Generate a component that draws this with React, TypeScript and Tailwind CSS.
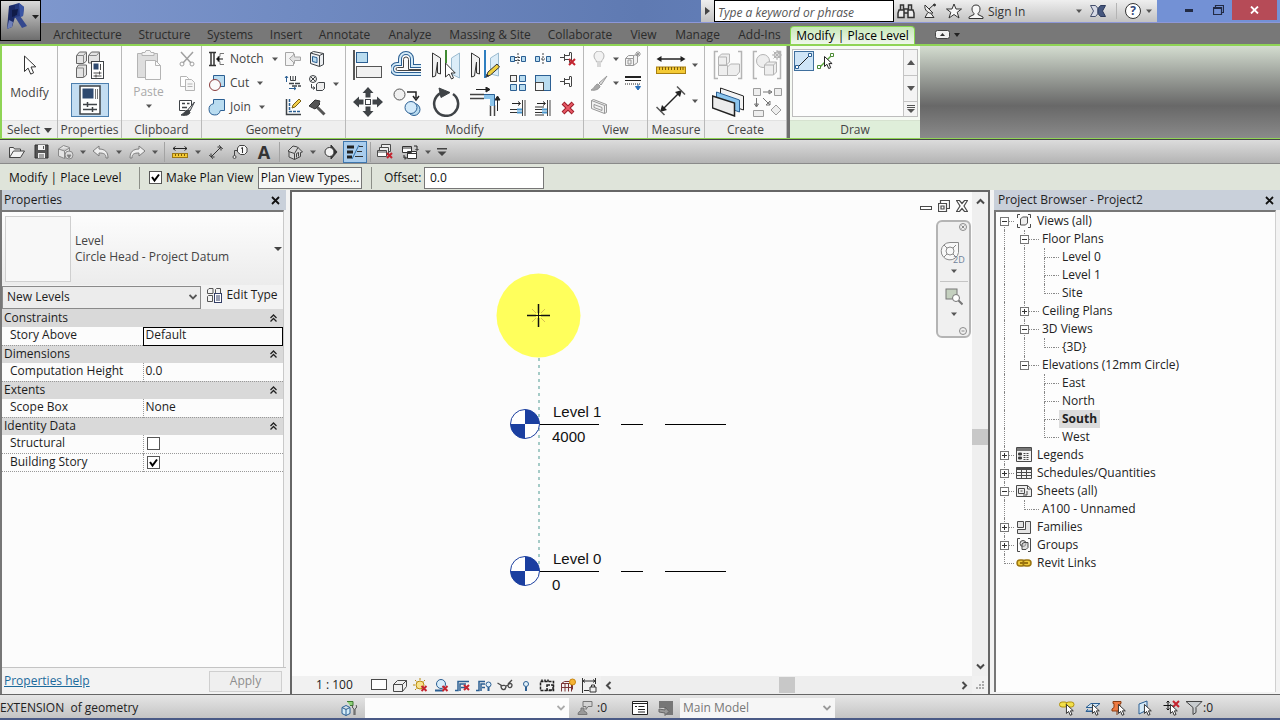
import React from 'react';

interface IconProps {
  w: number;
  h?: number;
  stroke?: string;
  children: React.ReactNode;
}

function Icon({ w, h = w, stroke = '#4a4a4a', children }: IconProps) {
  return (
    <svg width={w} height={h} viewBox={`0 0 ${w} ${h}`} fill="none" stroke={stroke} strokeWidth="1" className="shrink-0" aria-hidden="true">
      {children}
    </svg>
  );
}

const DARK = '#3f4347';
const BLUE = '#2b5f93';
const SKY = '#b9dcf0';
const DIM = '#b4b4b4';
const PALE = '#eeeeee';

const Arrow = () => (
  <Icon w={6} h={4} stroke="none">
    <path d="M0 0.5h6L3 4z" fill="#555" />
  </Icon>
);

const Cursor = ({ x = 0, y = 0 }: { x?: number; y?: number }) => (
  <path
    d={`M${x + 0.5} ${y + 0.5}v10l2.4-2.2 1.8 4.2 2-0.8-1.8-4.1h3.2z`}
    fill="#fff"
    stroke="#222"
  />
);

const RedX = ({ x, y, s = 6 }: { x: number; y: number; s?: number }) => (
  <path d={`M${x} ${y}l${s} ${s}M${x + s} ${y}l${-s} ${s}`} stroke="#c4242f" strokeWidth="2" />
);

/* ---------- shared glyphs ---------- */

const ModifyIcon = () => (
  <Icon w={14} h={20}>
    <path d="M1.5 1v15.5l3.6-3.4 2.6 6 2.9-1.3-2.6-5.8 4.8-0.2z" fill="#fff" stroke="#333" />
  </Icon>
);

const TypePropsIcon = () => (
  <Icon w={30}>
    <path d="M1.5 5.5l3-3.5h7v9l-3 2.500h-7zM13.500 5.500l3-3.500h8v11h-11zM1.500 18l2-3h8v10l-3 2.500h-7z" fill="#e3e3e3" stroke="#666" />
    <path d="M1.500 5.500h7v8M8.500 5.500l3-3.500M13.500 5.500h8l3-3.500M1.500 18h7v9" stroke="#888" />
    <rect x="16.500" y="11.500" width="12" height="17" fill="#fff" stroke={DARK} />
    <rect x="18.500" y="13.500" width="5" height="6" fill="#2f4a70" stroke="none" />
    <path d="M25.500 14v6M18.500 23h8M18.500 26h8M24.500 21.500v3M21 24.500v3" />
  </Icon>
);

const PropsIcon = () => (
  <Icon w={22} h={30}>
    <rect x="1" y="1" width="20" height="28" fill="#fff" stroke={DARK} strokeWidth="1.500" />
    <rect x="3.500" y="3.500" width="11" height="10" fill="#2f4a70" stroke="none" />
    <path d="M16.500 4v10M18.500 4v10" stroke="#777" />
    <path d="M4 19.500h14M4 24.500h14M8.500 17v5M13.500 22v5" stroke={DARK} strokeWidth="1.500" />
  </Icon>
);

const PasteIcon = () => (
  <Icon w={26} h={30} stroke={DIM}>
    <path d="M1.500 3.500h20v24h-20z" fill="#dedede" />
    <path d="M6 5.500v-3h3l1-2h4l1 2h3v3z" fill="#f2f2f2" />
    <path d="M9.500 10.500h10l5 5v14h-15z" fill="#fbfbfb" />
    <path d="M19.500 10.500v5h5" />
  </Icon>
);

const CutIcon = () => (
  <Icon w={16} stroke="#a0a0a0">
    <path d="M2 1l10 11M14 1L4 12" strokeWidth="1.500" />
    <circle cx="3" cy="13" r="2" />
    <circle cx="13" cy="13" r="2" />
  </Icon>
);

const CopyClipIcon = () => (
  <Icon w={16} stroke={DIM}>
    <path d="M1.500 1.500h6l2 2v8h-8z" fill="#fff" />
    <path d="M6.500 4.500h6l3 3v8h-9z" fill="#f6f6f6" />
    <path d="M8.500 9h5M8.500 11.500h5" />
  </Icon>
);

const MatchIcon = () => (
  <Icon w={18} h={17}>
    <path d="M1.500 1.500h12v5M1.500 1.500v10h6" fill="#fff" stroke={DARK} />
    <path d="M4 4.500h3M9 4.500h2.500M4 8.500h5" stroke={DARK} strokeWidth="1.500" />
    <path d="M16.500 3l-6.500 7.500 2 1.500z" fill="#ddd" stroke={DARK} />
    <path d="M3 16c3-1 4-5 7-5l2 2c0 3-5 4-9 3z" fill={DARK} stroke={DARK} />
  </Icon>
);

/* ---------- geometry ---------- */

const NotchIcon = () => (
  <Icon w={18} h={16} stroke="#333">
    <path d="M1 1.500h7M1 14.500h7M3 2v12M6 2v12" strokeWidth="1.500" />
    <path d="M16 2.500h-4v3h-2v5h2v3h4" stroke="#777" />
    <path d="M15 8h-6M11 6L8.500 8 11 10z" fill="#111" stroke="#111" />
  </Icon>
);

const GeoCutIcon = () => (
  <Icon w={18} h={18}>
    <path d="M5.500 1.500h11v11h-5l-6-6z" fill={SKY} stroke={BLUE} />
    <circle cx="7" cy="11" r="5.500" fill="#fbfbfb" stroke="#8a3b3b" />
  </Icon>
);

const GeoJoinIcon = () => (
  <Icon w={18} h={18}>
    <path d="M5.500 1.500h11v11h-4.200a5.700 5.700 0 1 1-6.800-6.800z" fill={SKY} stroke={BLUE} />
  </Icon>
);

const CopeIcon = () => (
  <Icon w={18} h={16} stroke="#a6a6a6">
    <path d="M9.500 4V1.500h-8v13h8V12" fill="#f4f4f4" />
    <path d="M16.500 6h-6V3L5.500 7.500l5 5v-3h6z" fill="#e2e2e2" />
  </Icon>
);

const WallJoinIcon = () => (
  <Icon w={18} h={16}>
    <path d="M2.500 1v6M1 3l1.500-2L4 3M5 13.500h7M10 12l2 1.500-2 1.500" stroke={BLUE} />
    <path d="M6.500 1v4.500h5V1M9 1v4" stroke={DARK} />
    <path d="M5 8.500h12M8 11h9" stroke={DARK} strokeWidth="1.500" strokeDasharray="5 1" />
  </Icon>
);

const PaintEdgeIcon = () => (
  <Icon w={18} h={18}>
    <path d="M2.500 1v15.500h14.500" stroke={DARK} strokeWidth="1.500" />
    <path d="M5.500 1v12.500h11.500" stroke={BLUE} strokeDasharray="3 1" strokeWidth="1.500" />
    <path d="M8 10l1-3 6-6 2 2-6 6z" fill="#f3cf4a" stroke="#7a6014" />
  </Icon>
);

const FaceIcon = () => (
  <Icon w={16}>
    <path d="M1.500 2l9 2.500v11l-9-3zM10.500 4.500l4-2v11l-4 2M1.500 2l3-1.500 10 2" fill="#eceff2" stroke={DARK} />
    <path d="M3.500 5.500l4.500 1.200v5l-4.500-1.200z" fill={SKY} stroke={BLUE} />
  </Icon>
);

const PaintIcon = () => (
  <Icon w={18} h={17}>
    <circle cx="5" cy="4" r="3.500" fill="#f2f2f2" stroke={DARK} />
    <path d="M2.500 1.500l5 5M7.500 1.500l-5 5M3.500 9v4h3M5 11.500L7 13 5 14.500" stroke={DARK} />
    <path d="M8.500 9l2-1.500h6v6l-2 2h-6z" fill="#eee" stroke={DARK} />
  </Icon>
);

const HammerIcon = () => (
  <Icon w={18} h={17}>
    <path d="M9 8l7.500 7.500" stroke="#555" strokeWidth="3" />
    <path d="M1 7l6-6 5 1-1 2 1 1-5 5z" fill="#555" stroke="#333" />
  </Icon>
);

/* ---------- modify ---------- */

const AlignIcon = () => (
  <Icon w={30}>
    <path d="M1 0v30" stroke="#222" strokeWidth="1.500" />
    <rect x="3.500" y="2.500" width="11" height="10" fill={SKY} stroke={BLUE} />
    <rect x="3.500" y="16.500" width="25" height="11" fill="#f1f1f1" stroke="#555" />
  </Icon>
);

const OffsetIcon = () => (
  <Icon w={32} h={28}>
    <path d="M30 15h-9V8a6 6 0 0 0-12 0v5H6a5 5 0 0 0 0 10h24" stroke={BLUE} strokeWidth="4" />
    <path d="M30 15h-9V8a6 6 0 0 0-12 0v5H6a5 5 0 0 0 0 10h24" stroke="#d5ebf8" strokeWidth="2" />
    <path d="M30 18.500H17.500V8.500a2.500 2.500 0 0 0-5 0v8H6.500a1.500 1.500 0 0 0 0 3H30" stroke="#444" />
  </Icon>
);

const MirrorPickIcon = () => (
  <Icon w={30}>
    <path d="M1.500 3l8 5v16l-3-1V12l-2 14-3 1z" fill="#f1f1f1" stroke="#333" />
    <path d="M28.500 3l-8 5v16l8 4z" fill="#dcedf8" stroke="#9bbbd0" />
    <path d="M15 0v13" stroke="#3f8a32" strokeWidth="2" />
    <path d="M14.500 13v14l3.500-3 2.500 5 2-1-2.300-5h4z" fill="#fff" stroke="#333" />
  </Icon>
);

const MirrorDrawIcon = () => (
  <Icon w={30}>
    <path d="M1.500 3l8 5v16l-3-1V12l-2 14-3 1z" fill="#f1f1f1" stroke="#333" />
    <path d="M28.500 3l-8 5v16l8 2z" fill="#dcedf8" stroke="#9bbbd0" />
    <path d="M15 0v28" stroke="#2f7fc0" strokeWidth="2" />
    <path d="M16 27l2-5 9-8 2.500 3-9 8z" fill="#f0d040" stroke="#333" />
    <path d="M16 27l1-3 2 2z" fill="#222" />
  </Icon>
);

const MoveIcon = () => (
  <Icon w={30} stroke="none">
    <path d="M15 0l5.500 6h-3v4.500h-5V6h-3zM15 30l5.500-6h-3v-4.500h-5V24h-3zM0 15l6-5.500v3h4.500v5H6v3zM30 15l-6-5.500v3h-4.500v5H24v3z" fill={DARK} />
    <rect x="12.500" y="12.500" width="5" height="5" fill="#fff" stroke={DARK} />
  </Icon>
);

const CopyIcon = () => (
  <Icon w={30}>
    <circle cx="7.500" cy="7.500" r="5.500" fill="#f0f0f0" stroke="#555" />
    <path d="M15 5h9v6M21 9l3 4 3-4" stroke="#222" strokeWidth="1.500" />
    <circle cx="22" cy="22.500" r="6" fill={SKY} stroke={BLUE} />
    <circle cx="19" cy="20.500" r="6" fill="#d3eafa" stroke={BLUE} />
  </Icon>
);

const RotateIcon = () => (
  <Icon w={30}>
    <path d="M10 6a12 12 0 1 0 12 1" stroke={DARK} strokeWidth="2.500" />
    <path d="M8 1l11 4.500-9 5z" fill={DARK} stroke={DARK} />
  </Icon>
);

const TrimIcon = () => (
  <Icon w={32} h={30}>
    <path d="M7 2.500h13M17 0l4 2.500-4 2.500zM28.500 24V11M26 13l2.500-4 2.500 4z" stroke="#222" fill="#222" />
    <path d="M1 7.500h14M1 11.500h14M21.500 18v11M25.500 18v11" stroke="#444" strokeWidth="1.500" />
    <path d="M15 9.500h8.500V19" stroke="#8cc4ea" strokeWidth="5" />
    <path d="M15 7.500h10.500V19" stroke={BLUE} />
  </Icon>
);

const SplitIcon = ({ gap = false }: { gap?: boolean }) => (
  <Icon w={16} h={14}>
    <path d="M0.500 4.500h4v5h-4zM11.500 4.500h4v5h-4z" fill={SKY} stroke={BLUE} />
    {gap ? (
      <path d="M8 1v12M6 7h4" stroke={DARK} strokeDasharray="2 1" />
    ) : (
      <path d="M5 5.500h6M5 8.500h6M8 1v12" stroke={DARK} strokeDasharray="2 1" />
    )}
  </Icon>
);

const PinIcon = ({ off = false }: { off?: boolean }) => (
  <Icon w={18} h={16}>
    <path d="M1 6.500h4M5.500 3v7M5.500 4.500h5M5.500 8.500h5M12.500 2v9M12.500 1.500h-2v3M10.500 8.500v3h2" stroke="#444" />
    {off && <RedX x={10} y={8} />}
  </Icon>
);

const ArrayIcon = () => (
  <Icon w={16}>
    <rect x="0.500" y="0.500" width="6" height="6" fill="#f2f2f2" stroke="#444" />
    <path d="M9.500 0.500h6v6h-6zM0.500 9.500h6v6h-6zM9.500 9.500h6v6h-6z" fill={SKY} stroke={BLUE} />
  </Icon>
);

const ScaleIcon = () => (
  <Icon w={16}>
    <rect x="0.500" y="0.500" width="15" height="15" fill={SKY} stroke={BLUE} />
    <rect x="0.500" y="7.500" width="8" height="8" fill="#f6f6f6" stroke="#444" />
  </Icon>
);

const ExtendIcon = ({ multi = false }: { multi?: boolean }) => (
  <Icon w={16}>
    <path d="M2 3.500h8M8 1.500l2.500 2-2.500 2" stroke="#222" />
    <path d="M12.500 0v16M15 0v16" stroke="#444" />
    <path d="M0 9.500h7M0 12.500h7" stroke="#333" />
    <path d="M7 9.500h5M7 12.500h5" stroke="#4a96cc" strokeWidth="2" />
    {multi && <path d="M0 7h9M0 15h9" stroke="#333" />}
  </Icon>
);

const DeleteIcon = () => (
  <Icon w={14}>
    <path d="M2 2l10 10M12 2L2 12" stroke="#9b1c28" strokeWidth="4" />
    <path d="M2.500 2.500l9 9M11.500 2.500l-9 9" stroke="#e85a66" strokeWidth="2" />
  </Icon>
);

/* ---------- view / measure / create / draw ---------- */

const BulbIcon = () => (
  <Icon w={16} h={17} stroke={DIM}>
    <path d="M5.500 11c0-2-2.500-3-2.500-6a5 5 0 0 1 10 0c0 3-2.500 4-2.500 6z" fill="#f2f2f2" />
    <path d="M6 13h4M6 15h4" />
  </Icon>
);

const BrushIcon = () => (
  <Icon w={18} h={16} stroke="#999">
    <path d="M17 1l-8 7 2 2z" fill="#ddd" />
    <path d="M1 15c3-1 4-6 7-6l2 2c0 3-5 5-9 4z" fill="#a8a8a8" />
  </Icon>
);

const BoxSparkIcon = () => (
  <Icon w={18} h={16} stroke="#999">
    <path d="M1.500 7.500h8v7h-8zM1.500 7.500l3-3h5M9.500 7.500v-3l4-1v8l-4 3" fill="#f2f2f2" />
    <path d="M14 0v6M11 3h6M12 1l4 4M16 1l-4 4M4 9h3v4H4z" />
  </Icon>
);

const LineworkIcon = () => (
  <Icon w={18} h={16}>
    <path d="M1 2h16" stroke="#222" strokeWidth="2" />
    <path d="M1 5.500h16" stroke="#222" />
    <path d="M1 9h16" stroke="#222" strokeDasharray="1 1" />
    <path d="M14 9v5M11.500 11.500L14 15l2.500-3.500z" stroke="#2a6fb8" fill="#2a6fb8" />
  </Icon>
);

const BeamIcon = () => (
  <Icon w={18} h={16} stroke="#999">
    <path d="M1.500 1.500l13 5v8l-13-5zM1.500 1.500l2-1 13 5v8l-2 1M14.500 6.500l2-1M4 5.500l8 3v3l-8-3z" fill="#f2f2f2" />
  </Icon>
);

const MeasureIcon = () => (
  <Icon w={30} h={20}>
    <path d="M4 4h22" stroke="#222" strokeWidth="1.500" />
    <path d="M0.500 4l5-3v6zM29.500 4l-5-3v6z" fill="#222" stroke="none" />
    <rect x="0.500" y="12" width="29" height="6.500" fill="#f4ca35" stroke="#a87f10" />
    <path d="M3.500 12v3M6.500 12v3M9.500 12v3M12.500 12v3M15.500 12v3M18.500 12v3M21.500 12v3M24.500 12v3M27 12v3" stroke="#7c5c08" />
  </Icon>
);

const DimensionIcon = () => (
  <Icon w={30}>
    <path d="M5 25L25 5" stroke="#222" strokeWidth="1.500" />
    <path d="M4 26l2-7 5 5zM26 4l-7 2 5 5z" fill="#222" stroke="none" />
    <path d="M0.500 21l8 8M21 0.500l8 8" stroke="#555" strokeWidth="1.500" />
  </Icon>
);

const GroupIcon = ({ round = false }: { round?: boolean }) => (
  <Icon w={30} stroke={DIM}>
    <path d="M5 1.500H1.500v27H5M25 1.500h3.500v27H25" strokeWidth="1.500" />
    {round ? (
      <>
        <circle cx="11" cy="11" r="6.500" fill={PALE} />
        <path d="M12.500 15l3-3h9v10l-3 3h-9zM12.500 15h9v10M21.500 15l3-3" fill={PALE} />
        <circle cx="25" cy="5" r="3" fill="#fff" />
        <path d="M25 0v10M20 5h10M21.500 1.500l7 7M28.500 1.500l-7 7" />
      </>
    ) : (
      <path d="M5.500 7l3-3h8v8l-3 3h-8zM5.500 15.500h9v10h-9zM14.500 17l3-3h9v8l-3 3.500h-9zM5.500 7h8v8" fill={PALE} />
    )}
  </Icon>
);

const AssemblyIcon = () => (
  <Icon w={32} h={30}>
    <path d="M8.500 1l23 8v14l-23-8z" fill="#f3f3f3" stroke="#222" />
    <path d="M4.500 5l23 8v12l-23-8z" fill="#8cc6ee" stroke={BLUE} />
    <path d="M0.500 9l22 7v13l-22-8z" fill="#ececec" stroke="#222" strokeWidth="1.500" />
  </Icon>
);

const SimilarIcon = () => (
  <Icon w={30} stroke="#9c9c9c">
    <path d="M1.500 1.500h7v7h-7zM22.500 1.500h7v7h-7zM1.500 23.500h10v6h-10z" fill={PALE} />
    <path d="M24 18l5 5-5 5-5-5z" fill={PALE} />
    <path d="M11 5h9M17 3l3 2-3 2zM4.500 11v9M2.500 17l2 3 2-3zM11 11l7 7M18 14v4h-4z" stroke="#777" />
  </Icon>
);

const LineIcon = () => (
  <Icon w={18}>
    <path d="M2.500 15.500l13-13" stroke="#222" />
    <path d="M0.500 13.500h3v3h-3zM13.500 1.500h3v3h-3z" fill="#fff" stroke={BLUE} />
  </Icon>
);

const PickIcon = () => (
  <Icon w={18}>
    <path d="M2.500 15.500l13-13" stroke="#5aa83a" strokeWidth="1.500" />
    <path d="M0.500 13.500h3v3h-3zM13.500 1.500h3v3h-3z" fill="#fff" stroke="#4c8a35" />
    <Cursor x={7} y={4} />
  </Icon>
);

/* ---------- quick access ---------- */

const qat: Record<string, React.ReactNode> = {
  Open: (
    <Icon w={18} h={14}>
      <path d="M1.500 12.500v-10h4l1 1.500h6v2M1.500 12.500l4-6.500h11l-4 6.500z" fill="#f2f2f2" stroke="#444" />
    </Icon>
  ),
  Save: (
    <Icon w={15} h={15}>
      <path d="M1 1h13v13H1z" fill="#555" stroke="#333" />
      <path d="M4 1h7v5H4zM4 9h7v5H4z" fill="#f1f1f1" stroke="none" />
      <path d="M5 11h5M5 13h5M9.500 2v3" stroke="#555" />
    </Icon>
  ),
  Synchronize: (
    <Icon w={17} h={16} stroke="#8a8a8a">
      <path d="M1.500 5l5-3.500 6 2v8l-5 3-6-2.500zM1.500 5l6 2 5-3M7.500 7v7.500" fill="#e4e4e4" />
      <circle cx="12" cy="11" r="4" fill="#ddd" />
      <path d="M10 11h4l-2 3z" fill="#777" />
    </Icon>
  ),
  Undo: (
    <Icon w={18} h={14} stroke="#7d7d7d">
      <path d="M1 6l6-5v3c6 0 9 3 9 9h-2c0-4-2-5-7-5v3z" fill="#eee" />
    </Icon>
  ),
  Redo: (
    <Icon w={18} h={14} stroke="#7d7d7d">
      <path d="M17 6l-6-5v3c-6 0-9 3-9 9h2c0-4 2-5 7-5v3z" fill="#eee" />
    </Icon>
  ),
  Measure: (
    <Icon w={16} h={14}>
      <path d="M1 3.500h14M3.500 1.500L1 3.500l2.500 2M12.500 1.500l2.500 2-2.500 2" stroke="#222" />
      <rect x="0.500" y="8.500" width="15" height="4" fill="#f4ca35" stroke="#9c7715" />
      <path d="M3.500 9v2M6.500 9v2M9.500 9v2M12.500 9v2" stroke="#7c5c08" />
    </Icon>
  ),
  'Aligned Dimension': (
    <Icon w={16}>
      <path d="M3 13L13 3M3 9.500V13h3.500M13 6.500V3H9.500" stroke="#333" />
      <path d="M1 11l4 4M11 1l4 4" stroke="#555" />
    </Icon>
  ),
  'Tag by Category': (
    <Icon w={16} h={14}>
      <path d="M2.500 11V5.500h3" stroke="#444" />
      <path d="M7.500 0.500h5l2.500 2.500v4l-2.500 2.500h-4L5.500 7V3z" fill="#f6f6f6" stroke="#444" />
      <path d="M9 3.500l1.500-1V8" stroke="#333" />
      <circle cx="2.500" cy="12" r="1.500" fill="#eee" />
    </Icon>
  ),
  '3D View': (
    <Icon w={16}>
      <path d="M1 7l5-5 4.500 1 5 5-2 0.500v4l-6 3-5.500-2.500V7.500z" fill="#d4d4d4" stroke="#444" />
      <path d="M1.500 7.500l6 2L11 3.500M7.500 9.500v6M9.500 13.500v-4l2-1v4" stroke="#444" />
    </Icon>
  ),
  Section: (
    <Icon w={14} h={16}>
      <path d="M7 1l6 7-6 7z" fill="#333" stroke="#333" />
      <circle cx="5.500" cy="8" r="4.500" fill="#f3f3f3" stroke="#333" />
    </Icon>
  ),
  'Close Hidden Windows': (
    <Icon w={18} h={17}>
      <path d="M4.500 1.500h9v7h-9z" fill="#eee" />
      <path d="M2.500 4.500h9v7h-9z" fill="#eee" />
      <path d="M0.500 7.500h9v6h-9zM0.500 9h9" fill="#fff" />
      <RedX x={10} y={10} s={5} />
    </Icon>
  ),
  'Switch Windows': (
    <Icon w={18} h={16}>
      <path d="M1.500 2.500h9v6h-9zM1.500 4h9M6.500 7.500h9v7h-9zM6.500 9.500h9" fill="#fff" stroke="#333" />
      <path d="M13 2h3v4M14.500 5L16 6.500 17.500 5M3 11v3h2M4 12.500L5.500 14 4 15.500" stroke="#222" />
    </Icon>
  ),
  Customize: (
    <Icon w={10} h={8} stroke="none">
      <path d="M0 0h10v1.500H0zM0.500 3.500h9L5 8z" fill="#444" />
    </Icon>
  ),
};

function Quick({ name, drop = false }: { name: string; drop?: boolean }) {
  return (
    <>
      <button aria-label={name} className="flex h-6 w-6 shrink-0 items-center justify-center">
        {qat[name]}
      </button>
      {drop && (
        <button aria-label={`${name} options`} className="flex h-6 w-3 shrink-0 items-center justify-center">
          <Arrow />
        </button>
      )}
    </>
  );
}

const Sep = () => <span className="mx-[3px] h-5 w-px shrink-0 bg-[#a3a3a3]" />;

function Panel({ title, width, children }: { title: React.ReactNode; width: string; children: React.ReactNode }) {
  return (
    <section className={`flex shrink-0 flex-col border-r border-[#b9b9b9] ${width}`}>
      <div className="flex h-[74px] pt-px">{children}</div>
      <h2 className="flex h-[18px] items-center justify-center gap-1 border-t border-[#e2e2e2] bg-[#efefef] pt-px text-[#444]">
        {title}
      </h2>
    </section>
  );
}

function Cell({ name, size, children }: { name: string; size: string; children: React.ReactNode }) {
  return (
    <button aria-label={name} className={`flex items-center justify-center ${size}`}>
      {children}
    </button>
  );
}

const S = 'h-6 w-full';
const L = 'h-9 w-full';

function Ribbon() {
  return (
    <div className="flex h-[95px] shrink-0 border-t-2 border-b border-l-2 border-[#8fd455] bg-gradient-to-b from-[#d4ddd0] via-[#686868] via-65% to-[#8a8a8a]">
      <div className="flex shrink-0 bg-[#fcfcfc]">
        <Panel width="w-14" title={<>Select <Icon w={8} h={5} stroke="none"><path d="M0 0h8L4 5z" fill="#444" /></Icon></>}>
          <button className="flex w-full flex-col items-center pt-2 text-[#444]">
            <ModifyIcon />
            <span className="mt-2.5">Modify</span>
          </button>
        </Panel>
        <Panel width="w-16" title="Properties">
          <div className="flex w-full flex-col items-center">
            <Cell name="Type Properties" size="h-9 w-9"><TypePropsIcon /></Cell>
            <button aria-label="Properties" aria-pressed="true" className="flex h-[34px] w-[38px] items-center justify-center border border-[#4d7fae] bg-[#c3ddf2]">
              <PropsIcon />
            </button>
          </div>
        </Panel>
        <Panel width="w-20" title="Clipboard">
          <button disabled className="flex w-[53px] flex-col items-center pt-[3px] text-[#a9a9a9]">
            <PasteIcon />
            <span className="mt-1 mb-1">Paste</span>
            <Arrow />
          </button>
          <div className="w-6">
            <Cell name="Cut to Clipboard" size={S}><CutIcon /></Cell>
            <Cell name="Copy to Clipboard" size={S}><CopyClipIcon /></Cell>
            <Cell name="Match Type Properties" size={S}><MatchIcon /></Cell>
          </div>
        </Panel>
        <Panel width="w-36" title="Geometry">
          <div className="w-[79px] pl-1.5 text-[#444]">
            <button className="flex h-6 items-center gap-1"><NotchIcon />Notch<span className="ml-1"><Arrow /></span></button>
            <button className="flex h-6 items-center gap-1"><GeoCutIcon />Cut<span className="ml-1"><Arrow /></span></button>
            <button className="flex h-6 items-center gap-1"><GeoJoinIcon />Join<span className="ml-1"><Arrow /></span></button>
          </div>
          <div className="w-6">
            <Cell name="Cope" size={S}><CopeIcon /></Cell>
            <Cell name="Wall Joins" size={S}><WallJoinIcon /></Cell>
            <Cell name="Split Face" size={S}><PaintEdgeIcon /></Cell>
          </div>
          <div className="w-6">
            <Cell name="Face" size={S}><FaceIcon /></Cell>
            <Cell name="Paint" size={S}><PaintIcon /></Cell>
            <Cell name="Demolish" size={S}><HammerIcon /></Cell>
          </div>
          <div className="flex w-3.5 items-center justify-center"><Arrow /></div>
        </Panel>
        <Panel width="w-[238px]" title="Modify">
          <div className="ml-0.5 grid w-[156px] shrink-0 grid-cols-4">
            <Cell name="Align" size={L}><AlignIcon /></Cell>
            <Cell name="Offset" size={L}><OffsetIcon /></Cell>
            <Cell name="Mirror - Pick Axis" size={L}><MirrorPickIcon /></Cell>
            <Cell name="Mirror - Draw Axis" size={L}><MirrorDrawIcon /></Cell>
            <Cell name="Move" size={L}><MoveIcon /></Cell>
            <Cell name="Copy" size={L}><CopyIcon /></Cell>
            <Cell name="Rotate" size={L}><RotateIcon /></Cell>
            <Cell name="Trim/Extend to Corner" size={L}><TrimIcon /></Cell>
          </div>
          <div className="ml-px grid w-[76px] grid-cols-3">
            <Cell name="Split Element" size={S}><SplitIcon /></Cell>
            <Cell name="Split with Gap" size={S}><SplitIcon gap /></Cell>
            <Cell name="Unpin" size={S}><PinIcon off /></Cell>
            <Cell name="Array" size={S}><ArrayIcon /></Cell>
            <Cell name="Scale" size={S}><ScaleIcon /></Cell>
            <Cell name="Pin" size={S}><PinIcon /></Cell>
            <Cell name="Trim/Extend Single" size={S}><ExtendIcon /></Cell>
            <Cell name="Trim/Extend Multiple" size={S}><ExtendIcon multi /></Cell>
            <Cell name="Delete" size={S}><DeleteIcon /></Cell>
          </div>
        </Panel>
        <Panel width="w-16" title="View">
          <div className="ml-[3px] w-6">
            <Cell name="Hide in View" size={S}><BulbIcon /></Cell>
            <Cell name="Override Graphics" size={S}><BrushIcon /></Cell>
            <Cell name="Beam" size={S}><BeamIcon /></Cell>
          </div>
          <div className="w-2.5">
            <Cell name="Hide options" size={S}><Arrow /></Cell>
            <Cell name="Override options" size={S}><Arrow /></Cell>
          </div>
          <div className="w-6">
            <Cell name="Selection Box" size={S}><BoxSparkIcon /></Cell>
            <Cell name="Linework" size={S}><LineworkIcon /></Cell>
          </div>
        </Panel>
        <Panel width="w-[57px]" title="Measure">
          <div className="ml-[5px] w-9">
            <Cell name="Measure" size={L}><MeasureIcon /></Cell>
            <Cell name="Dimension" size={L}><DimensionIcon /></Cell>
          </div>
          <div className="w-3">
            <Cell name="Measure options" size={L}><Arrow /></Cell>
            <Cell name="Dimension options" size={L}><Arrow /></Cell>
          </div>
        </Panel>
        <Panel width="w-[82px]" title="Create">
          <div className="ml-[3px] grid w-[78px] grid-cols-2">
            <Cell name="Create Group" size={L}><GroupIcon /></Cell>
            <Cell name="Create Assembly" size={L}><GroupIcon round /></Cell>
            <Cell name="Create Parts" size={L}><AssemblyIcon /></Cell>
            <Cell name="Create Similar" size={L}><SimilarIcon /></Cell>
          </div>
        </Panel>
      </div>
      <div className="w-[3px] shrink-0 bg-[#6f6f6f]" />
      <section className="flex w-[130px] shrink-0 flex-col bg-[#f6faf4]">
        <div className="h-[74px] p-0.5 pt-[3px]">
          <div className="flex h-[68px] border border-[#bdbdbd] bg-[#fdfdfd]">
            <div className="flex flex-1 p-px">
              <button aria-label="Line" aria-pressed="true" className="flex h-5 w-5 items-center justify-center border border-[#3f6f9d] bg-[#cfe5f7]"><LineIcon /></button>
              <Cell name="Pick Lines" size="h-5 w-6"><PickIcon /></Cell>
            </div>
            <div className="flex w-3.5 flex-col divide-y divide-[#c4c4c4] border-l border-[#c4c4c4] bg-[#f4f4f4]">
              <button aria-label="Scroll up" className="flex flex-1 items-center justify-center"><Icon w={8} h={5} stroke="none"><path d="M0 5h8L4 0z" fill="#555" /></Icon></button>
              <button aria-label="Scroll down" className="flex flex-1 items-center justify-center"><Icon w={8} h={5} stroke="none"><path d="M0 0h8L4 5z" fill="#555" /></Icon></button>
              <button aria-label="More" className="flex h-3.5 items-center justify-center"><Icon w={8} h={8} stroke="none"><path d="M0 0h8v1H0zM0 2h8v1H0zM0 4h8L4 8z" fill="#555" /></Icon></button>
            </div>
          </div>
        </div>
        <h2 className="flex h-[18px] items-center justify-center border-t border-[#d6e2d0] bg-[#dfeeda] pt-px text-[#444]">Draw</h2>
      </section>
    </div>
  );
}

const tabs = [
  ['Architecture', 'w-[87px]'],
  ['Structure', 'w-[67px]'],
  ['Systems', 'w-[64px]'],
  ['Insert', 'w-[48px]'],
  ['Annotate', 'w-[69px]'],
  ['Analyze', 'w-[62px]'],
  ['Massing & Site', 'w-[98px]'],
  ['Collaborate', 'w-[82px]'],
  ['View', 'w-[45px]'],
  ['Manage', 'w-[63px]'],
  ['Add-Ins', 'w-[61px]'],
];

function Header() {
  return (
    <header className="relative shrink-0">
      <div className="flex h-[23px] border-b border-[#8d97d8] bg-gradient-to-r from-[#8099cf] via-[#5f7ab2] to-[#7290d4]">
        <div className="flex-1" />
        <div className="flex w-[456px] shrink-0 items-center bg-gradient-to-b from-[#efefef] to-[#c2c2c2] text-[#333]">
          <button aria-label="Toggle search" className="flex w-[13px] justify-center">
            <Icon w={5} h={8} stroke="none"><path d="M0 0v8l5-4z" fill="#444" /></Icon>
          </button>
          <input aria-label="Search help" placeholder="Type a keyword or phrase" className="h-[22px] w-[180px] border border-black bg-white px-[3px] pt-0.5 italic outline-none placeholder:text-[#555]" />
          <button aria-label="Search" className="flex w-6 justify-center">
            <Icon w={18} h={16}>
              <path d="M2 7h5v7.500H1V10zM11 7h5l1 3v4.500h-6z" fill="#eee" stroke="#333" strokeWidth="1.500" />
              <path d="M3.500 7V2h3v5M11.500 7V2h3v5M7 6h4M7 10h4" stroke="#333" strokeWidth="1.500" />
            </Icon>
          </button>
          <button aria-label="Communication Center" className="flex w-6 justify-center">
            <Icon w={14} h={16}>
              <path d="M2 2c-1 5 3 9 8 8zM6 6l5-4.500M4.500 10L2 14.500h9L8 10.500" fill="#eee" stroke="#333" />
              <circle cx="11.500" cy="2" r="1" fill="#333" stroke="#333" />
            </Icon>
          </button>
          <button aria-label="Favorites" className="flex w-6 justify-center">
            <Icon w={16}>
              <path d="M8 1l2 5h5.500l-4.300 3.300L13 15l-5-3.500L3 15l1.800-5.700L0.500 6H6z" fill="#f8f8f8" stroke="#333" />
            </Icon>
          </button>
          <button className="flex items-center gap-1 pt-px pl-0.5">
            <Icon w={16}>
              <path d="M8 1c-3 0-4 2-4 4s1 3.500 2 4.500v1L1 13v1.500h14V13l-5-2.500v-1c1-1 2-2.500 2-4.500s-1-4-4-4z" fill="#f8f8f8" stroke="#333" />
            </Icon>
            Sign In
          </button>
          <div className="flex-1" />
          <button aria-label="Sign in options" className="flex w-3.5 items-center"><Arrow /></button>
          <button aria-label="Exchange Apps">
            <Icon w={16} h={14}>
              <path d="M0.500 1.500h5l2.500 3v5l-2.500 3h-5l3-5.500z" fill="#d8dbe6" stroke="#46506e" />
              <path d="M15.500 1.500h-5L8 4.500v5l2.500 3h5l-3-5.500z" fill="#46577e" stroke="#2d3a5c" />
            </Icon>
          </button>
          <span className="mr-2 ml-2.5 h-4 w-px bg-[#b4b4b4]" />
          <button aria-label="Help" className="flex size-4 items-center justify-center rounded-full border border-[#333] bg-white text-[12px] leading-none font-bold text-[#33477a]">?</button>
          <button aria-label="Help options" className="flex w-4 justify-center"><Arrow /></button>
        </div>
        <div className="flex w-[123px] shrink-0 items-start bg-[#7391d5]">
          <div className="flex h-5 flex-1 items-center justify-end gap-5 pr-2">
            <button aria-label="Minimize"><Icon w={8} h={3} stroke="none"><path d="M0 0h8v3H0z" fill="#222b45" /></Icon></button>
            <button aria-label="Restore">
              <Icon w={11} h={10} stroke="#222b45"><path d="M0.500 2.500h8v7h-8zM0.500 3.500h8M2.500 2V0.500h8v7H9" strokeWidth="1.200" /></Icon>
            </button>
          </div>
          <button aria-label="Close" className="mr-[3px] flex h-5 w-[45px] items-center justify-center bg-[#b64b57]">
            <Icon w={9} h={8} stroke="#fff"><path d="M1 0.500l7 7M8 0.500l-7 7" strokeWidth="1.800" /></Icon>
          </button>
        </div>
      </div>
      <nav className="flex h-[21px] items-end bg-[#787878] pl-[44px]">
        <div role="tablist" className="flex shrink-0 text-[#2b2b2b]">
          {tabs.map(([name, width]) => (
            <button key={name} role="tab" aria-selected="false" className={`h-5 shrink-0 pt-0.5 whitespace-nowrap ${width}`}>{name}</button>
          ))}
          <button role="tab" aria-selected="true" className="h-[18px] w-[125px] shrink-0 self-end rounded-t-sm border border-b-0 border-[#86d850] bg-gradient-to-b from-[#c8e8b8] to-[#eff7eb] text-black">Modify | Place Level</button>
        </div>
        <button aria-label="Minimize ribbon" className="mb-[5px] ml-5 flex items-center gap-1">
          <Icon w={15} h={9} stroke="#444"><rect x="0.500" y="0.500" width="14" height="8" rx="2" fill="#f2f2f2" /><path d="M5 6h5L7.500 3z" fill="#333" stroke="none" /></Icon>
          <Icon w={6} h={4} stroke="none"><path d="M0 0h6L3 4z" fill="#222" /></Icon>
        </button>
      </nav>
      <button aria-label="Application menu" className="absolute top-0 left-0 flex h-[41px] w-[41px] items-center gap-1 border border-black bg-gradient-to-b from-[#dadada] to-[#6e6e6e] pb-2 pl-[5px]">
        <Icon w={22} h={27} stroke="none">
          <path d="M3 3l10-3 5 4-1 9-8 2z" fill="#22377c" />
          <path d="M13 0l5 4-1 9-3 1z" fill="#3a55a4" />
          <path d="M3 3l6-1v12L6 24l-5 2z" fill="#1b2a66" />
          <path d="M9 14l5-1 7 10-5 2z" fill="#34488e" />
          <path d="M6 7l6-1-1 6-5 2z" fill="#101b48" />
          <path d="M1 26l2-9 4 2-1 5z" fill="#6f80ba" />
        </Icon>
        <Icon w={7} h={4} stroke="none"><path d="M0 0h7L3.500 4z" fill="#222" /></Icon>
      </button>
    </header>
  );
}

function QuickAccess() {
  return (
    <div className="flex h-[25px] shrink-0 items-center border-t border-b border-t-[#444] border-b-[#8a8a8a] bg-gradient-to-b from-[#dcdcdc] to-[#b4b4b4] pl-[5px]">
      <Quick name="Open" />
      <Quick name="Save" />
      <Quick name="Synchronize" drop />
      <Quick name="Undo" drop />
      <Quick name="Redo" drop />
      <Sep />
      <Quick name="Measure" drop />
      <Quick name="Aligned Dimension" />
      <Quick name="Tag by Category" />
      <button aria-label="Text" className="flex h-6 w-6 items-center justify-center text-[18px] leading-none font-bold text-[#333]">A</button>
      <Sep />
      <Quick name="3D View" drop />
      <Quick name="Section" />
      <button aria-label="Thin Lines" aria-pressed="true" className="flex h-[22px] w-6 items-center justify-center border border-[#3f77ad] bg-[#a9cdee]">
        <Icon w={18} h={16}>
          <path d="M1 3h7M1 8h6M1 13h5" stroke="#222" strokeWidth="3" />
          <path d="M13 2.500h4M11 7.500h5M9 12.500h8" stroke="#333" />
          <path d="M6 15L13 1" stroke="#2b6da8" />
        </Icon>
      </button>
      <Sep />
      <Quick name="Close Hidden Windows" />
      <Quick name="Switch Windows" drop />
      <button aria-label="Customize" className="flex h-6 w-4 shrink-0 items-center justify-center">{qat.Customize}</button>
    </div>
  );
}

function Tick({ id, checked, label }: { id: string; checked?: boolean; label?: string }) {
  return (
    <span className="relative inline-flex size-[13px] shrink-0">
      <input id={id} type="checkbox" defaultChecked={checked} aria-label={label} className="peer size-[13px] appearance-none border border-[#555] bg-white" />
      <svg viewBox="0 0 13 13" className="pointer-events-none absolute inset-0 hidden peer-checked:block" fill="none" stroke="#000" strokeWidth="2">
        <path d="M3 6l2.500 3.500L10 3.500" />
      </svg>
    </span>
  );
}

function OptionsBar() {
  return (
    <div className="flex h-[26px] shrink-0 items-center bg-[#dfe4da] pt-px text-[#111]">
      <span className="w-[139px] shrink-0 pl-[9px]">Modify | Place Level</span>
      <span className="mr-[9px] h-[22px] w-px bg-[#8c8f88]" />
      <Tick id="make-plan" checked />
      <label htmlFor="make-plan" className="w-[96px] shrink-0 pl-1 whitespace-nowrap">Make Plan View</label>
      <button className="h-[22px] w-[104px] shrink-0 border border-[#777] bg-[#f7f8f6] whitespace-nowrap">Plan View Types...</button>
      <span className="mr-3 ml-[9px] h-[22px] w-px bg-[#8c8f88]" />
      <label htmlFor="offset" className="w-10 shrink-0 whitespace-nowrap">Offset:</label>
      <input id="offset" defaultValue="0.0" className="h-[22px] w-[120px] border border-[#777] bg-white px-[5px] outline-none" />
    </div>
  );
}

const Chevron = ({ color = '#555' }: { color?: string }) => (
  <svg width="8" height="6" viewBox="0 0 8 6" fill="none" stroke={color} strokeWidth="1.800" className="pointer-events-none absolute top-1/2 right-1 -translate-y-1/2">
    <path d="M0.500 1L4 4.500 7.500 1" />
  </svg>
);

const CloseX = () => (
  <Icon w={9} stroke="#111"><path d="M1 1l7 7M8 1L1 8" strokeWidth="1.800" /></Icon>
);

const groups = [
  { name: 'Constraints', rows: [{ label: 'Story Above', value: 'Default', active: true }] },
  { name: 'Dimensions', rows: [{ label: 'Computation Height', value: '0.0' }] },
  { name: 'Extents', rows: [{ label: 'Scope Box', value: 'None' }] },
  { name: 'Identity Data', rows: [{ label: 'Structural', check: false }, { label: 'Building Story', check: true }] },
] as { name: string; rows: { label: string; value?: string; active?: boolean; check?: boolean }[] }[];

function Properties() {
  return (
    <aside className="flex w-[286px] shrink-0 flex-col border-l-2 border-[#777] bg-[#f3f3f3] text-[#1c1c1c]">
      <div className="flex h-5 shrink-0 items-center justify-between bg-[#c9d0da] pr-1.5 pl-0.5">
        <h2>Properties</h2>
        <button aria-label="Close Properties"><CloseX /></button>
      </div>
      <div className="mr-0.5 flex min-h-0 flex-1 flex-col border-t-2 border-r border-[#777] border-r-[#c9c9c9] bg-[#fcfcfc]">
        <button className="flex h-[73px] shrink-0 items-center bg-gradient-to-b from-[#fdfdfd] to-[#ececec] pr-px pl-[3px] text-left text-[#444]">
          <span className="mr-1 size-[66px] border border-[#cfcfcf] bg-[#f8f8f8]" />
          <span className="flex-1 leading-4">Level<br />Circle Head - Project Datum</span>
          <Icon w={8} h={4} stroke="none"><path d="M0 0h8L4 4z" fill="#444" /></Icon>
        </button>
        <div className="flex h-6 shrink-0 items-center bg-[#f3f3f3]">
          <span className="relative w-[199px]">
            <select aria-label="Type filter" className="h-[23px] w-full appearance-none border border-[#8a8a8a] bg-[#ececec] px-1 outline-none">
              <option>New Levels</option>
            </select>
            <Chevron />
          </span>
          <button className="flex flex-1 items-center justify-center gap-1 pb-1 whitespace-nowrap">
            <Icon w={16}>
              <path d="M1.500 3l1.500-1.500h4v5H1.500zM9.500 6.500V2.500l1-1h4v5M1.500 14.500v-5l1-1h4v6z" fill="#f4f4f4" stroke="#555" />
              <rect x="8.500" y="6.500" width="7" height="9" fill="#fff" stroke="#333f66" />
              <path d="M10 9h4M10 11h4M10 13h4" stroke="#333f66" />
            </Icon>
            Edit Type
          </button>
        </div>
        <table className="w-full table-fixed border-collapse">
          <colgroup>
            <col className="w-[141px]" />
            <col />
          </colgroup>
          {groups.map(g => (
            <tbody key={g.name}>
              <tr className="h-[18px] bg-[#d9d9d9]">
                <th colSpan={2} className="p-0 pr-1.5 pl-0.5 font-normal">
                  <span className="flex h-[17px] items-center justify-between">
                    {g.name}
                    <Icon w={7} h={8} stroke="#222"><path d="M0.500 4L3.500 1 6.500 4M0.500 7.500l3-3 3 3" strokeWidth="1.300" /></Icon>
                  </span>
                </th>
              </tr>
              {g.rows.map(r => (
                <tr key={r.label} className="h-[18px] border-b border-dotted border-[#999]">
                  <td className="p-0 pl-2 align-top leading-[15px]">{r.label}</td>
                  <td className={r.active ? 'border border-black p-0 pl-0.5 align-top leading-[14px]' : 'border-l border-dotted border-[#999] p-0 pl-0.5 align-top leading-[15px]'}>
                    {r.check === undefined ? r.value : (
                      <span className="flex h-[17px] items-center pl-px"><Tick id={r.label} label={r.label} checked={r.check} /></span>
                    )}
                  </td>
                </tr>
              ))}
            </tbody>
          ))}
        </table>
      </div>
      <div className="flex h-[27px] shrink-0 items-center justify-between border-t border-[#c4c4c4] pr-1 pl-0.5">
        <a href="#help" className="text-[#1c6a9c] underline">Properties help</a>
        <button disabled className="h-[21px] w-[73px] border border-[#cfcfcf] bg-[#efefef] text-[#8d8d8d]">Apply</button>
      </div>
    </aside>
  );
}

/* ---------- drawing area ---------- */

const LevelHead = ({ y }: { y: number }) => (
  <g>
    <circle cx="233" cy={y} r="14.500" fill="#fff" stroke="#1b3fa0" />
    <path d={`M233 ${y}v-14.500a14.500 14.500 0 0 1 14.500 14.500zM233 ${y}v14.500a14.500 14.500 0 0 1-14.500-14.500z`} fill="#1b3fa0" />
    <path d={`M248 ${y + 0.5}h59M329 ${y + 0.5}h22M373 ${y + 0.5}h61`} stroke="#000" />
  </g>
);

const viewIcons: [string, React.ReactNode][] = [
  ['Detail Level', <rect key="a" x="0.500" y="1.500" width="15" height="10" fill="#fff" />],
  ['Visual Style', <path key="a" d="M1.500 6.500l4-4h9v6l-4 5h-9zM1.500 6.500h9v7M10.500 6.500l4-4" fill="#f0f0f0" />],
  ['Sun Path', <g key="a"><circle cx="7" cy="7" r="4" fill="#f8e28a" stroke="#b88a10" /><path d="M7 0v2M0 7h2M2 2l1.500 1.500M12 2l-1.500 1.500M2 12l1.500-1.500" stroke="#b88a10" /><RedX x={8.5} y={8} s={5} /></g>],
  ['Shadows', <g key="a"><circle cx="7" cy="6" r="4.500" fill="#d7ecfa" stroke={BLUE} /><path d="M1 12.500h8" stroke={BLUE} strokeWidth="2" /><RedX x={8.5} y={8} s={5} /></g>],
  ['Crop View', <g key="a"><path d="M0 12.500h3v-9h11M5 13V6h6M6 9.500h4" stroke={BLUE} strokeWidth="1.500" /><RedX x={9} y={7} s={5} /></g>],
  ['Show Crop Region', <g key="a"><path d="M0 12.500h3v-9h6M5 13V6h4M6 9.500h3" stroke={BLUE} strokeWidth="1.500" /><circle cx="12.500" cy="6.500" r="2.500" fill="#e2f1fb" stroke={BLUE} /><path d="M12.500 9v4" stroke={BLUE} strokeWidth="2" /></g>],
  ['Temporary Hide', <path key="a" d="M0.500 5l5 3M15 2l-4 4M4 8c0 4 4 5 5 1 0-2-3-2-5-1zM9 8l2-1c0 4 4 3 4 0 0-2-3-2-4 0" strokeWidth="1.300" />],
  ['Reveal Hidden', <g key="a"><circle cx="8" cy="6" r="2.500" fill="#e2f1fb" stroke={BLUE} /><path d="M8 9v4" stroke={BLUE} strokeWidth="2" /></g>],
  ['Temporary View Properties', <path key="a" d="M1.500 3.500h13v9h-13zM8 7h6v5H8zM3 1.500v2M6 1.500v2M9 1.500v2" stroke="#222" strokeDasharray="3 1" strokeWidth="1.500" />],
  ['Analytical Model', <g key="a"><path d="M1.500 13.500v-8l3-2h8v8M1.500 5.500h10v8M5 5.500v8M8.500 5.500v8M1.500 9.500h10" stroke="#7b3434" /><circle cx="12.500" cy="4" r="3" fill="#f5b335" stroke="#c98710" /></g>],
  ['Reveal Constraints', <path key="a" d="M1.500 0v15M14.500 0v6M2 3h12M4 1.500L2 3l2 1.500M12 1.500L14 3l-2 1.500M3 12.500h5M9 9h6v5H9zM10.500 9V7h3v2" stroke="#333" fill="none" />],
];

function Canvas() {
  return (
    <main className="mx-1 flex min-w-0 flex-1 flex-col border-t-2 border-r-2 border-l-2 border-[#666] bg-[#fcfcfc]">
      <div className="flex min-h-0 flex-1">
        <div className="relative min-w-0 flex-1 overflow-hidden">
          <svg className="absolute top-0 left-0" width="460" height="420" fill="none" aria-hidden="true">
            <circle cx="246.500" cy="123.500" r="42" fill="#ffff5c" />
            <path d="M247 166v213" stroke="#a5cbc7" strokeWidth="2" strokeDasharray="3 4" />
            <path d="M240 117l4 4M253 117l-4 4M240 130l4-4M253 130l-4-4" stroke="#d6bf50" />
            <path d="M246.500 112v9M246.500 126v9M235 123.500h9M249 123.500h9" stroke="#111" strokeWidth="1.500" />
            <path d="M246.500 112v23M235 123.500h23" stroke="#111" />
            <LevelHead y={232} />
            <LevelHead y={379} />
          </svg>
          <div className="font-[Liberation_Sans,sans-serif] text-[15px] leading-[18px] text-[#111]">
            <span className="absolute top-[211px] left-[261px]">Level 1</span>
            <span className="absolute top-[236px] left-[260px]">4000</span>
            <span className="absolute top-[358px] left-[261px]">Level 0</span>
            <span className="absolute top-[384px] left-[260px]">0</span>
          </div>
          <div className="absolute top-2 right-1 flex items-center gap-1.5">
            <button aria-label="Minimize view"><Icon w={12} h={12}><rect x="0.500" y="6.500" width="11" height="3" fill="#fff" /></Icon></button>
            <button aria-label="Restore view"><Icon w={12}><path d="M2.500 3V0.500h9v8H9M0.500 3.500h8v8h-8zM3 6h3v3H3z" strokeWidth="1.200" /></Icon></button>
            <button aria-label="Close view"><Icon w={12}><path d="M0.500 0.500h3L6 3.500l2.500-3h3L8 6l3.500 5.500h-3L6 8.500l-2.500 3h-3L4 6z" fill="#fff" strokeWidth="1.200" /></Icon></button>
          </div>
          <div className="absolute top-7 right-px flex h-[118px] w-[35px] flex-col items-center rounded-md border-2 border-[#b4b4b4] bg-[#f0f0f0]">
            <button aria-label="Close navigation bar" className="mt-px self-end pr-0.5"><Icon w={8} stroke="#8a8a8a"><circle cx="4" cy="4" r="3.500" /><path d="M2.500 2.500l3 3M5.500 2.500l-3 3" /></Icon></button>
            <button aria-label="Steering wheel" className="mt-2.5">
              <svg width="30" height="24" viewBox="0 0 30 24" fill="none" stroke="#8a8a8a" aria-hidden="true">
                <path d="M11 1.500h8.500v10a8.700 8.700 0 1 1-8.500-10z" fill="#f8f8f8" />
                <circle cx="11" cy="10" r="4" />
                <path d="M5 16l3-3M14 13l3 3M14 7l3-3M8 7L5 4" />
                <text x="14" y="22" fontSize="9" fill="#6f8299" stroke="none">2D</text>
              </svg>
            </button>
            <span className="mt-1"><Arrow /></span>
            <span className="mt-2 h-px w-7 bg-[#c4c4c4]" />
            <button aria-label="Zoom in region" className="mt-1.5">
              <Icon w={18} stroke="#777"><rect x="1" y="1" width="11" height="10" fill="#c4d0bf" /><circle cx="11" cy="10" r="3.500" fill="#fff" /><path d="M13.500 12.500l4 4" strokeWidth="2" /></Icon>
            </button>
            <span className="mt-1.5"><Arrow /></span>
            <button aria-label="Navigation options" className="mt-auto mb-px self-end pr-0.5"><Icon w={8} stroke="#8a8a8a"><circle cx="4" cy="4" r="3.500" /><path d="M2.500 4h3" /></Icon></button>
          </div>
        </div>
        <div className="relative flex w-4 shrink-0 flex-col items-center justify-between bg-[#efefef] py-1.5">
          <Icon w={9} h={7}><path d="M1 5.500L4.500 2 8 5.500" strokeWidth="2" /></Icon>
          <span className="absolute top-[49%] left-0 h-4 w-4 bg-[#c8c8c8]" />
          <Icon w={9} h={7}><path d="M1 1.500L4.500 5 8 1.500" strokeWidth="2" /></Icon>
        </div>
      </div>
      <div className="flex h-[18px] shrink-0 items-center bg-[#f1f1f1]">
        <button className="w-[76px] pr-[10px] pl-6 text-left whitespace-nowrap">1 : 100</button>
        {viewIcons.map(([name, drawing]) => (
          <button key={name} aria-label={name} className="flex w-[21px] shrink-0 justify-center"><Icon w={16} h={15}>{drawing}</Icon></button>
        ))}
        <div className="relative ml-0.5 flex h-full flex-1 items-center justify-between bg-[#eeeeee] px-1">
          <Icon w={7} h={9}><path d="M5.500 1L2 4.500 5.500 8" strokeWidth="2" /></Icon>
          <span className="absolute top-px left-[48%] h-4 w-4 bg-[#c8c8c8]" />
          <Icon w={7} h={9}><path d="M1.500 1L5 4.500 1.500 8" strokeWidth="2" /></Icon>
        </div>
        <span className="flex w-4 justify-center">
          <Icon w={8} stroke="none"><path d="M6 0h2v2H6zM3 3h2v2H3zM6 3h2v2H6zM0 6h2v2H0zM3 6h2v2H3zM6 6h2v2H6z" fill="#aaa" /></Icon>
        </span>
      </div>
    </main>
  );
}

/* ---------- project browser ---------- */

interface Node {
  name: string;
  icon?: React.ReactNode;
  open?: boolean;
  closed?: boolean;
  bold?: boolean;
  children?: Node[];
}

const tree: Node[] = [
  {
    name: 'Views (all)',
    open: true,
    icon: <Icon w={16}><path d="M4 1.500H1.500V5M12 1.500h2.500V5M4 14.500H1.500V11M12 14.500h2.500V11" /><path d="M4.500 6l2-2h5v6l-2 2h-5z" fill="#eee" /></Icon>,
    children: [
      { name: 'Floor Plans', open: true, children: [{ name: 'Level 0' }, { name: 'Level 1' }, { name: 'Site' }] },
      { name: 'Ceiling Plans', closed: true },
      { name: '3D Views', open: true, children: [{ name: '{3D}' }] },
      {
        name: 'Elevations (12mm Circle)',
        open: true,
        children: [{ name: 'East' }, { name: 'North' }, { name: 'South', bold: true }, { name: 'West' }],
      },
    ],
  },
  { name: 'Legends', closed: true, icon: <Icon w={16}><path d="M0.500 0.500h15v14H0.500z" fill="#f4f4f4" /><path d="M1 2.500h14" stroke="#777" strokeWidth="3" /><path d="M2.500 6h3v2h-3zM2.500 10h3v2h-3z" fill="#333" /><path d="M7.500 6.500h6M7.500 8.500h6M7.500 10.500h6M7.500 12.500h6" strokeDasharray="2 1" /></Icon> },
  { name: 'Schedules/Quantities', closed: true, icon: <Icon w={16} h={14}><path d="M0.500 1.500h15v11H0.500z" fill="#f4f4f4" /><path d="M0.500 2.500h15" strokeWidth="3" /><path d="M0.500 6.500h15M0.500 9.500h15M5.500 3v9.500M10.500 3v9.500" /></Icon> },
  {
    name: 'Sheets (all)',
    open: true,
    icon: <Icon w={16} h={14}><path d="M0.500 1.500h11l4 3.500v7.500h-15zM11.500 1.500V5h4" fill="#eee" /><path d="M2.500 4.500h6v5h-6zM4.500 7h2M11 7v4H7" /></Icon>,
    children: [{ name: 'A100 - Unnamed' }],
  },
  { name: 'Families', closed: true, icon: <Icon w={16} h={15}><path d="M1.500 1.500h6v6h-6zM9.500 1.500h5v12h-13v-4h8z" fill="#e5e5e5" /></Icon> },
  { name: 'Groups', closed: true, icon: <Icon w={16}><path d="M4 1.500H1.500v13H4M12 1.500h2.500v13H12" /><circle cx="7" cy="6.500" r="3" fill="#ddd" /><path d="M6 7l2-1.500h4v5l-2 2H6z" fill="#ccc" fillOpacity="0.600" /></Icon> },
  { name: 'Revit Links', icon: <Icon w={16} h={10} stroke="#9a7410"><rect x="1" y="2" width="8" height="6" rx="3" fill="#f0cb3c" strokeWidth="1.500" /><rect x="7" y="2" width="8" height="6" rx="3" fill="#f0cb3c" strokeWidth="1.500" /><path d="M4 5h8" strokeWidth="2" /></Icon> },
];

function TreeRow({ node, guides, last, first }: { node: Node; guides: boolean[]; last: boolean; first: boolean }) {
  const children = node.children ?? [];
  return (
    <li>
      <div className="flex h-[18px] items-center whitespace-nowrap">
        {guides.map((on, i) => (
          <span key={i} className="flex h-full w-5 shrink-0">
            {on && <span className="ml-2.5 border-l border-dotted border-[#888]" />}
          </span>
        ))}
        <span className="relative h-full w-5 shrink-0">
          {!first && <span className="absolute top-0 left-2.5 h-2 border-l border-dotted border-[#888]" />}
          {!last && <span className="absolute top-2.5 bottom-0 left-2.5 border-l border-dotted border-[#888]" />}
          <span className="absolute top-[9px] right-0 left-2.5 border-t border-dotted border-[#888]" />
          {(node.open || node.closed) && (
            <button aria-label={`Toggle ${node.name}`} className="absolute top-[5px] left-1.5 flex size-[9px] bg-white">
              <Icon w={9} stroke="#777"><rect x="0.500" y="0.500" width="8" height="8" /><path d={node.closed ? 'M2 4.500h5M4.500 2v5' : 'M2 4.500h5'} stroke="#333" /></Icon>
            </button>
          )}
        </span>
        {node.icon ? (
          <span className="mx-0.5 flex w-4 shrink-0 justify-center">{node.icon}</span>
        ) : (
          <span className="mt-px w-[5px] shrink-0 border-t border-dotted border-[#888]" />
        )}
        <span className={node.bold ? 'bg-[#dcdcdc] px-[3px] leading-[18px] font-bold' : 'px-[3px] leading-[18px]'}>{node.name}</span>
      </div>
      {children.length > 0 && (
        <ul>
          {children.map((c, i) => (
            <TreeRow key={c.name} node={c} guides={[...guides, !last]} last={i === children.length - 1} first={false} />
          ))}
        </ul>
      )}
    </li>
  );
}

function Browser() {
  return (
    <aside className="flex w-[286px] shrink-0 flex-col bg-[#f3f3f3] text-[#222]">
      <div className="flex h-5 shrink-0 items-center justify-between bg-[#c9d0da] pr-1.5 pl-1">
        <h2>Project Browser - Project2</h2>
        <button aria-label="Close Project Browser"><CloseX /></button>
      </div>
      <div className="mr-1 mb-0.5 min-h-0 flex-1 border-t-2 border-r border-l-2 border-[#777] border-r-[#d0d0d0] bg-[#fdfdfd]">
        <ul className="-ml-0.5">
          {tree.map((n, i) => (
            <TreeRow key={n.name} node={n} guides={[]} last={i === tree.length - 1} first={i === 0} />
          ))}
        </ul>
      </div>
    </aside>
  );
}

const selectIcons: [string, React.ReactNode][] = [
  ['Select Links', <g key="a" stroke="#b09010"><rect x="0.500" y="2" width="8" height="5" rx="2.500" fill="#f2e04a" /><rect x="7" y="2" width="8" height="5" rx="2.500" fill="#f2e04a" /></g>],
  ['Select Underlay', <path key="a" d="M6 3.500h9l-5 4H1zM1 11h7M3 9l-2 2.500h6" stroke={BLUE} fill="#d6eaf7" />],
  ['Select Pinned', <path key="a" d="M2 1.500h8v2H9v4l2 1.500v2H1V9l2-1.500v-4H2zM6 11v4" stroke="#8c3c10" fill="#ee7a42" />],
  ['Select by Face', <path key="a" d="M2 4l8-3v9l-8 4z" stroke={BLUE} fill="#d6eaf7" />],
  ['Drag on Selection', <g key="a"><path d="M5 1v9M0.500 5.500h9M3.500 2.500L5 1l1.500 1.500M3.500 8.500L5 10l1.500-1.500" stroke="#111" /><RedX x={10} y={1} /></g>],
];

function StatusBar() {
  return (
    <footer className="flex h-[26px] shrink-0 items-center border-t border-b-2 border-t-[#666] border-b-[#4a5a86] bg-gradient-to-b from-[#e6e6e6] to-[#c4c4c4] pt-0.5 text-[#222]">
      <span className="w-[337px] shrink-0 whitespace-pre">EXTENSION  of geometry</span>
      <button aria-label="Worksets" className="flex w-[28px] shrink-0 justify-start pl-1">
        <Icon w={17} h={16}>
          <path d="M1 7.500l4-2 4 2v6l-4 2-4-2zM1 7.500l4 2 4-2M5 9.500v6" fill="#d5ecf8" stroke={BLUE} />
          <path d="M6 1.500h6v4H9" fill="#8fd07a" stroke="#3c7a30" />
          <path d="M12 5c-1 1-1 3 1 4v6M15 5c1 1 1 3-1 4v6" stroke="#555" />
        </Icon>
      </button>
      <span className="relative w-[204px] shrink-0">
        <select aria-label="Active workset" className="h-5 w-full appearance-none bg-[#fcfcfc]" defaultValue="">
          <option value=""></option>
        </select>
        <Chevron color="#aaa" />
      </span>
      <button aria-label="Editing requests" className="ml-2 flex w-[52px] shrink-0 items-center gap-0.5">
        <Icon w={18} h={16}>
          <path d="M6 1.500h9v5h-4l-2 3v-3H6z" fill="#d4d4d4" stroke="#777" />
          <path d="M1 14.500c0-3 2-3 3-4V8h3v3c2 1 3 1 3 3.500z" fill="#999" stroke="#777" />
        </Icon>
        :0
      </button>
      <button aria-label="Design options" className="flex w-[22px] shrink-0 justify-center">
        <Icon w={16}>
          <path d="M0.500 1.500h15v13h-15zM0.500 3.500h15" fill="#fff" stroke="#222" />
          <path d="M3 6.500h2M6.500 6.500h6M6 9.500h7M6 12h7" stroke="#222" />
        </Icon>
      </button>
      <button aria-label="Add to set" className="flex w-[29px] shrink-0 justify-center">
        <Icon w={16}>
          <path d="M1 1h14v14H8V8H1z" fill="#777" stroke="none" />
          <path d="M1 9l6 1V7l4 4.500-4 4V13l-6-1z" fill="#999" stroke="#666" />
        </Icon>
      </button>
      <span className="relative w-[155px] shrink-0">
        <select aria-label="Active design option" className="h-5 w-full appearance-none bg-[#f6f6f6] px-[3px] text-[#777]">
          <option>Main Model</option>
        </select>
        <Chevron color="#999" />
      </span>
      <div className="flex flex-1 items-center justify-end pr-[67px]">
        <div className="flex">
          {selectIcons.map(([name, drawing]) => (
            <button key={name} aria-label={name} className="flex w-[26px] justify-center">
              <Icon w={18} h={16}>
                {drawing}
                <g transform="translate(7 4) scale(0.900)"><Cursor /></g>
              </Icon>
            </button>
          ))}
        </div>
        <button aria-label="Filter" className="flex items-center">
          <Icon w={18} h={15}><path d="M1 1.500h16l-6 6v5l-3 2v-7z" fill="#c9cdd0" stroke="#444" /></Icon>
          :0
        </button>
      </div>
    </footer>
  );
}

export default function App() {
  return (
    <div className="flex h-screen flex-col overflow-hidden bg-[#f3f3f3] font-[Open_Sans,sans-serif] text-[12px] leading-4 text-[#222]">
      <Header />
      <Ribbon />
      <QuickAccess />
      <OptionsBar />
      <div className="flex min-h-0 flex-1">
        <Properties />
        <Canvas />
        <Browser />
      </div>
      <StatusBar />
    </div>
  );
}
